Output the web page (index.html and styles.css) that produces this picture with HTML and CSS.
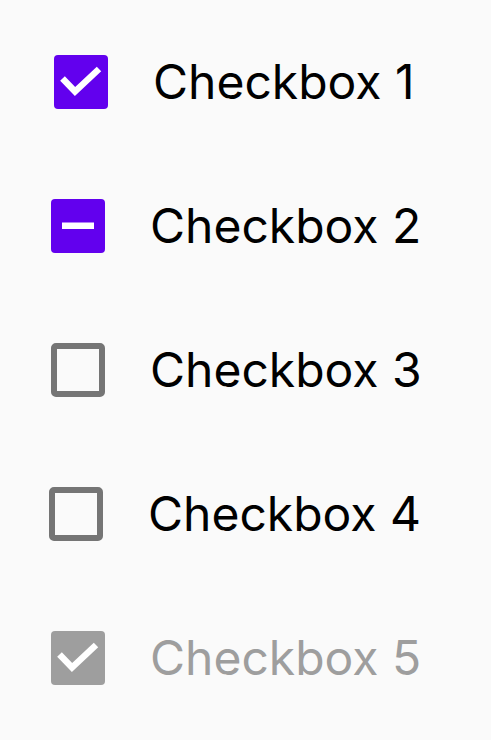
FILE: index.html
```html
<!DOCTYPE html>
<html>
<head>
<meta charset="utf-8">
<link rel="stylesheet" href="styles.css">
</head>
<body>
<div class="list">
  <div class="row row-a">
    <span class="box box-checked">
      <svg viewBox="0 0 54 54" width="54" height="54"><polyline points="8.5,23.5 21,36.5 45,14" fill="none" stroke="#fff" stroke-width="6.5" stroke-linecap="butt" stroke-linejoin="miter"/></svg>
    </span>
    <span class="label">Checkbox 1</span>
  </div>
  <div class="row">
    <span class="box box-checked">
      <svg viewBox="0 0 54 54" width="54" height="54"><rect x="11" y="23.5" width="32" height="6.5" fill="#fff"/></svg>
    </span>
    <span class="label">Checkbox 2</span>
  </div>
  <div class="row">
    <span class="box box-empty"></span>
    <span class="label">Checkbox 3</span>
  </div>
  <div class="row row-b">
    <span class="box box-empty"></span>
    <span class="label">Checkbox 4</span>
  </div>
  <div class="row">
    <span class="box box-disabled">
      <svg viewBox="0 0 54 54" width="54" height="54"><polyline points="8.5,23.5 21,36.5 45,14" fill="none" stroke="#fff" stroke-width="6.5" stroke-linecap="butt" stroke-linejoin="miter"/></svg>
    </span>
    <span class="label label-disabled">Checkbox 5</span>
  </div>
</div>
</body>
</html>
```
FILE: styles.css
```css
html, body {
  margin: 0;
  padding: 0;
  background: #fafafa;
}
body {
  font-family: Inter, Roboto, "Liberation Sans", sans-serif;
}
.list {
  display: flex;
  flex-direction: column;
  padding-top: 10px;
}
.row {
  height: 144px;
  display: flex;
  align-items: center;
  padding-left: 51px;
  gap: 45px;
}
.row-a { padding-left: 54px; }
.row-b { padding-left: 49px; }
.box {
  width: 54px;
  height: 54px;
  box-sizing: border-box;
  border-radius: 4px;
  flex: none;
  display: block;
}
.box svg { display: block; }
.box-checked { background: #6200ee; }
.box-disabled { background: #9e9e9e; }
.box-empty {
  border: 6px solid #757575;
  border-radius: 5px;
}
.label {
  font-size: 48px;
  font-weight: 400;
  color: #000;
  line-height: 1;
}
.label-disabled { color: #9e9e9e; }
```
